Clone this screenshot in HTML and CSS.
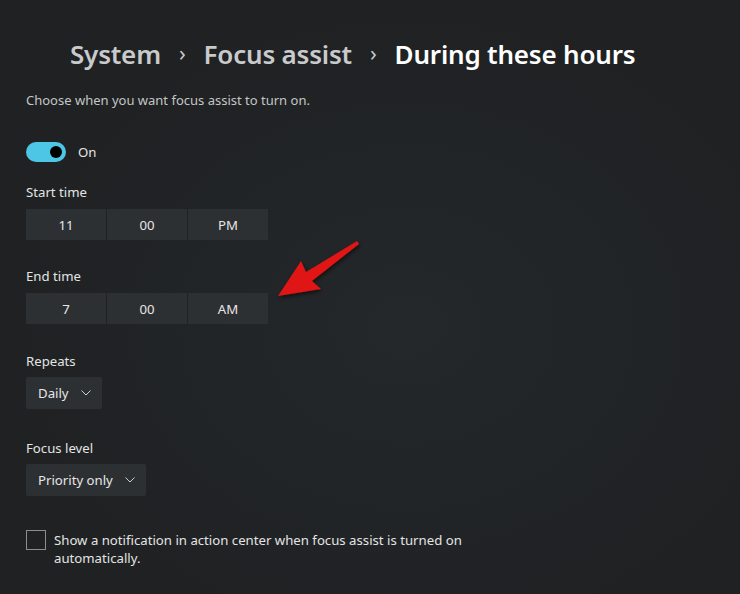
FILE: index.html
```html
<!DOCTYPE html>
<html>
<head>
<meta charset="utf-8">
<link rel="stylesheet" href="styles.css">
</head>
<body>
<div class="page">
  <h1 class="crumbs">
    <span class="crumb">System</span>
    <span class="sep">&#x203A;</span>
    <span class="crumb">Focus assist</span>
    <span class="sep">&#x203A;</span>
    <span class="crumb current">During these hours</span>
  </h1>
  <p class="subtitle">Choose when you want focus assist to turn on.</p>

  <div class="toggle-row">
    <div class="toggle"><div class="knob"></div></div>
    <span class="toggle-label">On</span>
  </div>

  <div class="field f-start">
    <div class="label">Start time</div>
    <div class="picker">
      <div class="seg">11</div>
      <div class="seg">00</div>
      <div class="seg">PM</div>
    </div>
  </div>

  <div class="field f-end">
    <div class="label">End time</div>
    <div class="picker">
      <div class="seg">7</div>
      <div class="seg">00</div>
      <div class="seg">AM</div>
    </div>
  </div>

  <div class="field f-repeat">
    <div class="label">Repeats</div>
    <div class="dropdown">
      <span>Daily</span>
      <svg class="chev" width="10" height="6" viewBox="0 0 10 6"><path d="M0.5 0.5 L5 5 L9.5 0.5" fill="none" stroke="#cfcfcf" stroke-width="1"/></svg>
    </div>
  </div>

  <div class="field f-level">
    <div class="label">Focus level</div>
    <div class="dropdown">
      <span>Priority only</span>
      <svg class="chev" width="10" height="6" viewBox="0 0 10 6"><path d="M0.5 0.5 L5 5 L9.5 0.5" fill="none" stroke="#cfcfcf" stroke-width="1"/></svg>
    </div>
  </div>

  <div class="check-row">
    <div class="checkbox"></div>
    <div class="check-text">Show a notification in action center when focus assist is turned on<br>automatically.</div>
  </div>

  <svg class="arrow" width="740" height="594" viewBox="0 0 740 594">
    <defs>
      <filter id="sh" x="-20%" y="-20%" width="140%" height="140%">
        <feDropShadow dx="1" dy="2" stdDeviation="2" flood-color="#000" flood-opacity="0.6"/>
      </filter>
    </defs>
    <polygon filter="url(#sh)" fill="#e01414" points="278,296 301,261 306,272 357,241 359,244 312,281 321,289"/>
  </svg>
</div>
</body>
</html>
```

FILE: styles.css
```css
html, body {
  margin: 0;
  padding: 0;
}
body {
  background: #202224;
  font-family: "Noto Sans", "Open Sans", sans-serif;
  color: #e4e4e4;
  width: 740px;
  height: 594px;
  overflow: hidden;
}
.page {
  position: relative;
  width: 740px;
  height: 594px;
  padding: 0 0 0 26px;
  box-sizing: border-box;
  background: radial-gradient(ellipse at 55% 55%, #24282a 0%, #1f2123 70%);
}
.crumbs {
  margin: 0;
  padding: 34px 0 0 44px;
  display: flex;
  align-items: center;
  font-size: 26px;
  font-weight: 600;
  line-height: 40px;
  color: #c9cacb;
  letter-spacing: -0.2px;
}
.crumb.current {
  color: #ffffff;
}
.sep {
  font-size: 22px;
  font-weight: 400;
  margin: 0 18px;
  position: relative;
  top: -2px;
}
.subtitle {
  margin: 16px 0 0 0;
  font-size: 13px;
  color: #c4c5c6;
  line-height: 20px;
}
.toggle-row {
  display: flex;
  align-items: center;
  margin-top: 32px;
  height: 20px;
}
.toggle {
  width: 40px;
  height: 20px;
  border-radius: 10px;
  background: #4cc6e4;
  position: relative;
}
.knob {
  position: absolute;
  width: 12px;
  height: 12px;
  border-radius: 50%;
  background: #000;
  left: 24px;
  top: 4px;
}
.toggle-label {
  margin-left: 12px;
  font-size: 13.2px;
}
.field.f-start {
  margin-top: 20px;
}
.field.f-end {
  margin-top: 26px;
}
.field.f-repeat {
  margin-top: 27px;
}
.field.f-level {
  margin-top: 29px;
}
.label {
  font-size: 13.2px;
  line-height: 20px;
  color: #e4e4e4;
  margin-bottom: 7px;
}
.f-repeat .label,
.f-level .label {
  margin-bottom: 6px;
}
.picker {
  display: flex;
  width: 242px;
  height: 31px;
  gap: 1px;
  background: #1f2123;
}
.seg {
  flex: 1;
  background: #2d3033;
  display: flex;
  align-items: center;
  justify-content: center;
  font-size: 13.2px;
  color: #e6e6e6;
}
.dropdown {
  display: inline-flex;
  align-items: center;
  height: 32px;
  padding: 0 11px 0 12px;
  background: #2d3033;
  font-size: 13.2px;
  color: #e6e6e6;
  border-radius: 2px;
}
.chev {
  margin-left: 12px;
}
.check-row {
  display: flex;
  align-items: flex-start;
  margin-top: 34px;
}
.checkbox {
  width: 18px;
  height: 18px;
  border: 1px solid #8c8d8e;
  flex: none;
}
.check-text {
  margin-left: 8px;
  font-size: 13.2px;
  line-height: 18px;
  color: #e4e4e4;
  margin-top: 1px;
}
.arrow {
  position: absolute;
  left: 0;
  top: 0;
  pointer-events: none;
}
```
